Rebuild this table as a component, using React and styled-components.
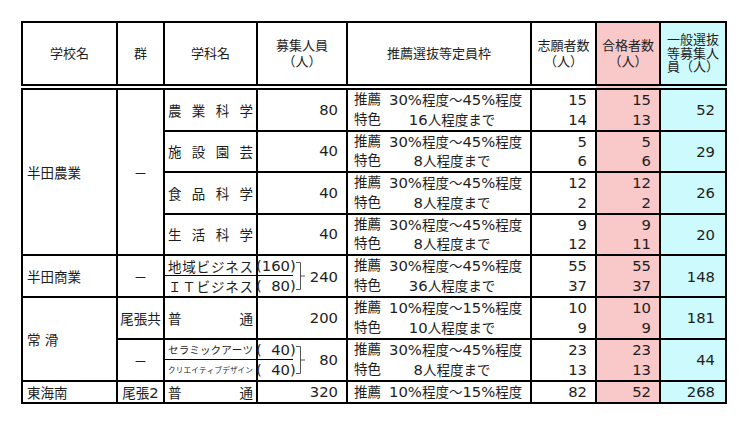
import React from 'react';
import styled, { createGlobalStyle } from 'styled-components';

const GlobalStyle = createGlobalStyle`
  html, body { margin: 0; padding: 0; background: #fff; }
  body { font-family: "DejaVu Sans", "Noto Sans CJK JP", sans-serif; color: #1a1a1a; }
`;

const FONT = `"DejaVu Sans", "Noto Sans CJK JP", sans-serif`;
const LH = 19.75;
const LH_SINGLE = 18;

const tones = { plain: '#ffffff', pink: '#f9c8c8', cyan: '#cdfbfd' };

const Page = styled.div`
  padding: 21px 0 0 21px;
`;

const Table = styled.table`
  border-collapse: collapse;
  table-layout: fixed;
  width: 706px;
  font-family: ${FONT};
  font-size: 13.5px;
  color: #1e1e1e;
`;

const Th = styled.th`
  border: 2px solid #000;
  border-bottom: 6px double #000;
  height: 61px;
  padding: 0;
  font-weight: normal;
  font-size: 13px;
  line-height: ${(p) => p.$lh || 16}px;
  background: ${(p) => tones[p.$tone || 'plain']};
  text-align: center;
  vertical-align: middle;
`;

const Td = styled.td`
  border: 2px solid #000;
  padding: 0 ${(p) => p.$pr || 0}px 0 ${(p) => p.$pl || 0}px;
  background: ${(p) => tones[p.$tone || 'plain']};
  text-align: ${(p) => p.$align || 'left'};
  vertical-align: middle;
  white-space: nowrap;
`;

const Num = styled.span`
  font-size: 14.8px;
`;

const Stack = styled.div`
  display: flex;
  flex-direction: column;
`;

const Line = styled.div`
  height: ${(p) => (p.$single ? LH_SINGLE : LH)}px;
  line-height: ${(p) => (p.$single ? LH_SINGLE : LH)}px;
  text-align: ${(p) => p.$align || 'left'};
`;

const Spread = styled.div`
  display: flex;
  justify-content: space-between;
  align-items: center;
  height: ${(p) => (p.$single ? LH_SINGLE : LH)}px;
  padding: 0 3px;
  font-size: ${(p) => p.$size || 13.5}px;
  border-bottom: ${(p) => (p.$rule ? '1px solid #000' : 'none')};
  box-sizing: border-box;
`;

const Quota = styled.div`
  display: flex;
  height: ${(p) => (p.$single ? LH_SINGLE : LH)}px;
  line-height: ${(p) => (p.$single ? LH_SINGLE : LH)}px;
`;

const QuotaLabel = styled.span`
  width: 35px;
  flex: none;
`;

const QuotaValue = styled.span`
  width: 126px;
  flex: none;
  text-align: ${(p) => (p.$center ? 'center' : 'left')};
`;

const CapSplit = styled.div`
  display: flex;
  align-items: center;
  margin-left: -2px;
`;

const SubCaps = styled.div`
  width: 37px;
  flex: none;
  display: flex;
  flex-direction: column;
`;

const SubCap = styled.div`
  height: ${LH}px;
  line-height: ${LH}px;
  box-sizing: border-box;
  border-bottom: ${(p) => (p.$rule ? '1px solid #000' : 'none')};
  white-space: pre;
`;

const Total = styled.div`
  flex: 1;
  text-align: right;
  padding-right: 8px;
`;

const Bracket = () => (
  <svg width="12" height="40" viewBox="0 0 12 40" style={{ flex: 'none', marginLeft: 2 }}>
    <path d="M1 6.5 H5.5 V33.5 H1 M5.5 20 H10" fill="none" stroke="#555" strokeWidth="1" />
  </svg>
);

const mix = (text) =>
  text.split(/([0-9%()\u2007]+)/).map((part, i) =>
    /^[0-9%()\u2007]+$/.test(part) ? <Num key={i}>{part}</Num> : part
  );

const spread = (text) => Array.from(text).map((c, i) => <span key={i}>{c}</span>);

const FS = '\u2007';

const rows = [
  {
    school: { name: '半田農業', span: 4 },
    gun: { text: '－', span: 4 },
    dept: '農業科学',
    cap: '80',
    quotas: [['推薦', '30%程度～45%程度'], ['特色', '16人程度まで']],
    apps: ['15', '14'],
    pass: ['15', '13'],
    general: '52',
  },
  {
    dept: '施設園芸',
    cap: '40',
    quotas: [['推薦', '30%程度～45%程度'], ['特色', '8人程度まで']],
    apps: ['5', '6'],
    pass: ['5', '6'],
    general: '29',
  },
  {
    dept: '食品科学',
    cap: '40',
    quotas: [['推薦', '30%程度～45%程度'], ['特色', '8人程度まで']],
    apps: ['12', '2'],
    pass: ['12', '2'],
    general: '26',
  },
  {
    dept: '生活科学',
    cap: '40',
    quotas: [['推薦', '30%程度～45%程度'], ['特色', '8人程度まで']],
    apps: ['9', '12'],
    pass: ['9', '11'],
    general: '20',
  },
  {
    school: { name: '半田商業', span: 1 },
    gun: { text: '－', span: 1 },
    split: [
      { name: '地域ビジネス', n: '160', size: 13.5 },
      { name: 'ＩＴビジネス', n: `${FS}80`, size: 13.5 },
    ],
    cap: '240',
    quotas: [['推薦', '30%程度～45%程度'], ['特色', '36人程度まで']],
    apps: ['55', '37'],
    pass: ['55', '37'],
    general: '148',
  },
  {
    school: { name: '常 滑', span: 2 },
    gun: { text: '尾張共', span: 1 },
    dept: '普通',
    cap: '200',
    quotas: [['推薦', '10%程度～15%程度'], ['特色', '10人程度まで']],
    apps: ['10', '9'],
    pass: ['10', '9'],
    general: '181',
  },
  {
    gun: { text: '－', span: 1 },
    split: [
      { name: 'セラミックアーツ', n: `${FS}40`, size: 10.6 },
      { name: 'クリエイティブデザイン', n: `${FS}40`, size: 7.6 },
    ],
    cap: '80',
    quotas: [['推薦', '30%程度～45%程度'], ['特色', '8人程度まで']],
    apps: ['23', '13'],
    pass: ['23', '13'],
    general: '44',
  },
  {
    school: { name: '東海南', span: 1 },
    gun: { text: '尾張2', span: 1 },
    dept: '普通',
    cap: '320',
    quotas: [['推薦', '10%程度～15%程度']],
    apps: ['82'],
    pass: ['52'],
    general: '268',
    single: true,
  },
];

const Numbers = ({ values, single }) => (
  <Stack>
    {values.map((v, i) => (
      <Line key={i} $align="right" $single={single}>
        <Num>{v}</Num>
      </Line>
    ))}
  </Stack>
);

const Row = ({ r }) => (
  <tr>
    {r.school && (
      <Td rowSpan={r.school.span} $pl={4}>
        {r.school.name}
      </Td>
    )}
    {r.gun && (
      <Td rowSpan={r.gun.span} $align="center">
        {mix(r.gun.text)}
      </Td>
    )}
    <Td>
      {r.split ? (
        <Stack>
          {r.split.map((s, i) => (
            <Spread key={i} $size={s.size} $rule={i === 0}>
              {spread(s.name)}
            </Spread>
          ))}
        </Stack>
      ) : (
        <Spread $single={r.single}>{spread(r.dept)}</Spread>
      )}
    </Td>
    <Td $align="right" $pr={r.split ? 0 : 8}>
      {r.split ? (
        <CapSplit>
          <SubCaps>
            {r.split.map((s, i) => (
              <SubCap key={i} $rule={i === 0}>
                <Num>({s.n})</Num>
              </SubCap>
            ))}
          </SubCaps>
          <Bracket />
          <Total>
            <Num>{r.cap}</Num>
          </Total>
        </CapSplit>
      ) : (
        <Line $align="right" $single={r.single}>
          <Num>{r.cap}</Num>
        </Line>
      )}
    </Td>
    <Td $pl={6}>
      <Stack>
        {r.quotas.map(([label, value], i) => (
          <Quota key={i} $single={r.single}>
            <QuotaLabel>{label}</QuotaLabel>
            <QuotaValue $center={label === '特色'}>{mix(value)}</QuotaValue>
          </Quota>
        ))}
      </Stack>
    </Td>
    <Td $pr={8}>
      <Numbers values={r.apps} single={r.single} />
    </Td>
    <Td $pr={8} $tone="pink">
      <Numbers values={r.pass} single={r.single} />
    </Td>
    <Td $pr={10} $tone="cyan" $align="right">
      <Num>{r.general}</Num>
    </Td>
  </tr>
);

export default function App() {
  return (
    <Page>
      <GlobalStyle />
      <Table>
        <colgroup>
          <col style={{ width: 95 }} />
          <col style={{ width: 47 }} />
          <col style={{ width: 93 }} />
          <col style={{ width: 90 }} />
          <col style={{ width: 184 }} />
          <col style={{ width: 65 }} />
          <col style={{ width: 64 }} />
          <col style={{ width: 66 }} />
        </colgroup>
        <thead>
          <tr>
            <Th>学校名</Th>
            <Th>群</Th>
            <Th>学科名</Th>
            <Th>
              募集人員
              <br />
              （人）
            </Th>
            <Th>推薦選抜等定員枠</Th>
            <Th>
              志願者数
              <br />
              （人）
            </Th>
            <Th $tone="pink">
              合格者数
              <br />
              （人）
            </Th>
            <Th $tone="cyan" $lh={13.5}>
              一般選抜
              <br />
              等募集人
              <br />
              員（人）
            </Th>
          </tr>
        </thead>
        <tbody>
          {rows.map((r, i) => (
            <Row key={i} r={r} />
          ))}
        </tbody>
      </Table>
    </Page>
  );
}
